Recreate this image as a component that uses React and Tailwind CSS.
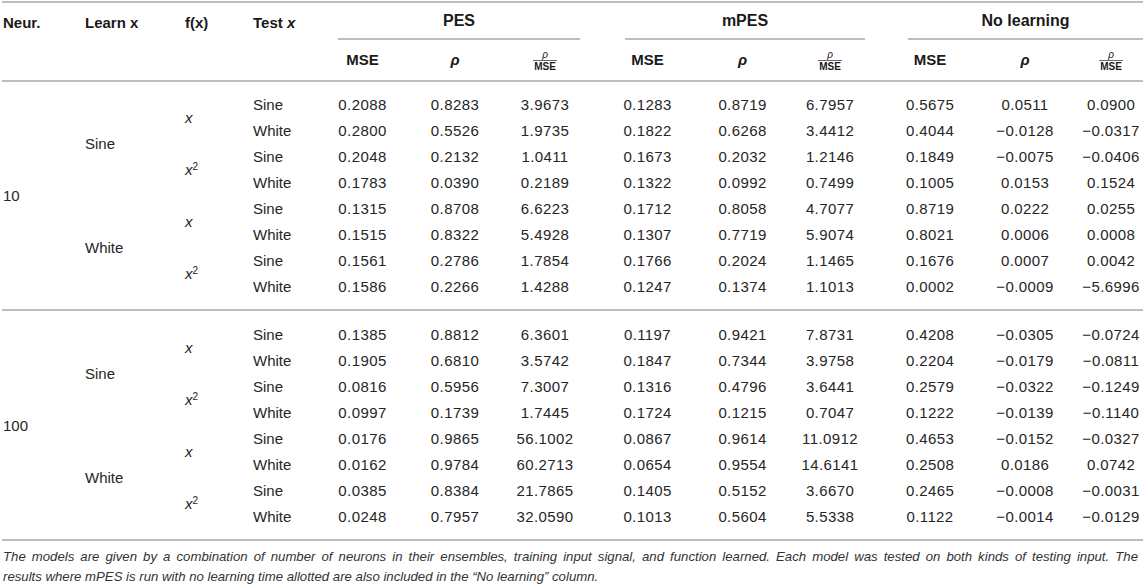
import React from "react";

const groups = [
  {
    neur: "10",
    learns: [
      {
        learn: "Sine",
        fs: [
          { f: "x", rows: [
            ["Sine", "0.2088", "0.8283", "3.9673", "0.1283", "0.8719", "6.7957", "0.5675", "0.0511", "0.0900"],
            ["White", "0.2800", "0.5526", "1.9735", "0.1822", "0.6268", "3.4412", "0.4044", "−0.0128", "−0.0317"],
          ] },
          { f: "x2", rows: [
            ["Sine", "0.2048", "0.2132", "1.0411", "0.1673", "0.2032", "1.2146", "0.1849", "−0.0075", "−0.0406"],
            ["White", "0.1783", "0.0390", "0.2189", "0.1322", "0.0992", "0.7499", "0.1005", "0.0153", "0.1524"],
          ] },
        ],
      },
      {
        learn: "White",
        fs: [
          { f: "x", rows: [
            ["Sine", "0.1315", "0.8708", "6.6223", "0.1712", "0.8058", "4.7077", "0.8719", "0.0222", "0.0255"],
            ["White", "0.1515", "0.8322", "5.4928", "0.1307", "0.7719", "5.9074", "0.8021", "0.0006", "0.0008"],
          ] },
          { f: "x2", rows: [
            ["Sine", "0.1561", "0.2786", "1.7854", "0.1766", "0.2024", "1.1465", "0.1676", "0.0007", "0.0042"],
            ["White", "0.1586", "0.2266", "1.4288", "0.1247", "0.1374", "1.1013", "0.0002", "−0.0009", "−5.6996"],
          ] },
        ],
      },
    ],
  },
  {
    neur: "100",
    learns: [
      {
        learn: "Sine",
        fs: [
          { f: "x", rows: [
            ["Sine", "0.1385", "0.8812", "6.3601", "0.1197", "0.9421", "7.8731", "0.4208", "−0.0305", "−0.0724"],
            ["White", "0.1905", "0.6810", "3.5742", "0.1847", "0.7344", "3.9758", "0.2204", "−0.0179", "−0.0811"],
          ] },
          { f: "x2", rows: [
            ["Sine", "0.0816", "0.5956", "7.3007", "0.1316", "0.4796", "3.6441", "0.2579", "−0.0322", "−0.1249"],
            ["White", "0.0997", "0.1739", "1.7445", "0.1724", "0.1215", "0.7047", "0.1222", "−0.0139", "−0.1140"],
          ] },
        ],
      },
      {
        learn: "White",
        fs: [
          { f: "x", rows: [
            ["Sine", "0.0176", "0.9865", "56.1002", "0.0867", "0.9614", "11.0912", "0.4653", "−0.0152", "−0.0327"],
            ["White", "0.0162", "0.9784", "60.2713", "0.0654", "0.9554", "14.6141", "0.2508", "0.0186", "0.0742"],
          ] },
          { f: "x2", rows: [
            ["Sine", "0.0385", "0.8384", "21.7865", "0.1405", "0.5152", "3.6670", "0.2465", "−0.0008", "−0.0031"],
            ["White", "0.0248", "0.7957", "32.0590", "0.1013", "0.5604", "5.5338", "0.1122", "−0.0014", "−0.0129"],
          ] },
        ],
      },
    ],
  },
];

const numPad = ["", "", "pr-[5px]", "", "", "", "", "", "pl-[9px]"];

function Fx({ f }) {
  if (f === "x2")
    return (
      <span>
        <span className="italic">x</span>
        <sup className="text-[10px]">2</sup>
      </span>
    );
  return <span className="italic">x</span>;
}

function Frac() {
  return (
    <span className="inline-flex flex-col items-center leading-none align-middle">
      <span className="italic font-normal text-[10px] leading-[10px]">ρ</span>
      <span className="border-t border-[#666] text-[10px] font-bold leading-[11px] px-[1px]">MSE</span>
    </span>
  );
}

function SubHead({ label, ml, mr }) {
  return (
    <th colSpan={3} className="p-0 align-top border-t-2 border-[#bdbdbd] font-bold text-[16px]">
      <div className={`flex flex-col ${ml} ${mr}`}>
        <div className="h-[35px] flex items-center justify-center">{label}</div>
        <div className="h-[2px] bg-[#bdbdbd]" />
      </div>
    </th>
  );
}

function Group({ g, first }) {
  const rows = [];
  let idx = 0;
  g.learns.forEach((l) => {
    l.fs.forEach((fo, fi) => {
      fo.rows.forEach((r, ri) => {
        const cells = [];
        if (idx === 0)
          cells.push(
            <td key="n" rowSpan={8} className="pl-[1px] align-middle">{g.neur}</td>
          );
        if (fi === 0 && ri === 0)
          cells.push(
            <td key="l" rowSpan={4} className="align-middle">{l.learn}</td>
          );
        if (ri === 0)
          cells.push(
            <td key="f" rowSpan={2} className="align-middle">
              <Fx f={fo.f} />
            </td>
          );
        cells.push(<td key="t">{r[0]}</td>);
        r.slice(1).forEach((v, vi) => {
          cells.push(
            <td key={"v" + vi} className={`text-center tracking-[0.4px] ${numPad[vi]}`}>{v}</td>
          );
        });
        rows.push(
          <tr key={idx} className="h-[26px]">{cells}</tr>
        );
        idx++;
      });
    });
  });
  return (
    <tbody>
      <tr>
        <td colSpan={13} className={first ? "h-[11px] p-0" : "h-[12px] p-0"} />
      </tr>
      {rows}
      <tr>
        <td colSpan={13} className="h-[10px] p-0 border-b-2 border-[#bdbdbd]" />
      </tr>
    </tbody>
  );
}

export default function App() {
  return (
    <div
      className="w-[1143px] bg-white text-[#262626] pt-[1px]"
      style={{ fontFamily: '"Liberation Sans", Arial, sans-serif' }}
    >
      <table className="table-fixed w-[1141px] ml-[2px] text-[15px] border-collapse">
        <colgroup>
          <col className="w-[83px]" />
          <col className="w-[100px]" />
          <col className="w-[68px]" />
          <col className="w-[67px]" />
          <col className="w-[85px]" />
          <col className="w-[100px]" />
          <col className="w-[85px]" />
          <col className="w-[115px]" />
          <col className="w-[75px]" />
          <col className="w-[100px]" />
          <col className="w-[100px]" />
          <col className="w-[90px]" />
          <col className="w-[73px]" />
        </colgroup>
        <thead className="text-[#1a1a1a]">
          <tr>
            <th rowSpan={2} className="text-left align-top pt-[9px] pl-[1px] font-bold border-t-2 border-b-2 border-[#bdbdbd]">Neur.</th>
            <th rowSpan={2} className="text-left align-top pt-[9px] font-bold border-t-2 border-b-2 border-[#bdbdbd]">Learn x</th>
            <th rowSpan={2} className="text-left align-top pt-[9px] font-bold border-t-2 border-b-2 border-[#bdbdbd]">f(x)</th>
            <th rowSpan={2} className="text-left align-top pt-[9px] font-bold border-t-2 border-b-2 border-[#bdbdbd]">
              Test <span className="italic">x</span>
            </th>
            <SubHead label="PES" ml="ml-[18px]" mr="mr-[10px]" />
            <SubHead label="mPES" ml="ml-[35px]" mr="mr-[15px]" />
            <SubHead label="No learning" ml="ml-[28px]" mr="mr-0" />
          </tr>
          <tr className="h-[41px]">
            {[0, 1, 2].map((k) => (
              <React.Fragment key={k}>
                <th className={`text-center font-bold border-b-2 border-[#bdbdbd] ${numPad[k * 3]}`}>MSE</th>
                <th className={`text-center border-b-2 border-[#bdbdbd] ${numPad[k * 3 + 1]}`}>
                  <span className="italic font-bold">ρ</span>
                </th>
                <th className={`text-center border-b-2 border-[#bdbdbd] ${numPad[k * 3 + 2]}`}>
                  <Frac />
                </th>
              </React.Fragment>
            ))}
          </tr>
        </thead>
        {groups.map((g, i) => (
          <Group key={i} g={g} first={i === 0} />
        ))}
      </table>
      <p className="mt-[6px] pl-[3px] pr-[5px] text-[13.2px] italic leading-[20px] text-[#333]">
        <span className="block text-justify [text-align-last:justify]">
          The models are given by a combination of number of neurons in their ensembles, training input signal, and function learned. Each model was tested on both kinds of testing input. The
        </span>
        <span className="block">
          results where mPES is run with no learning time allotted are also included in the “No learning” column.
        </span>
      </p>
    </div>
  );
}
